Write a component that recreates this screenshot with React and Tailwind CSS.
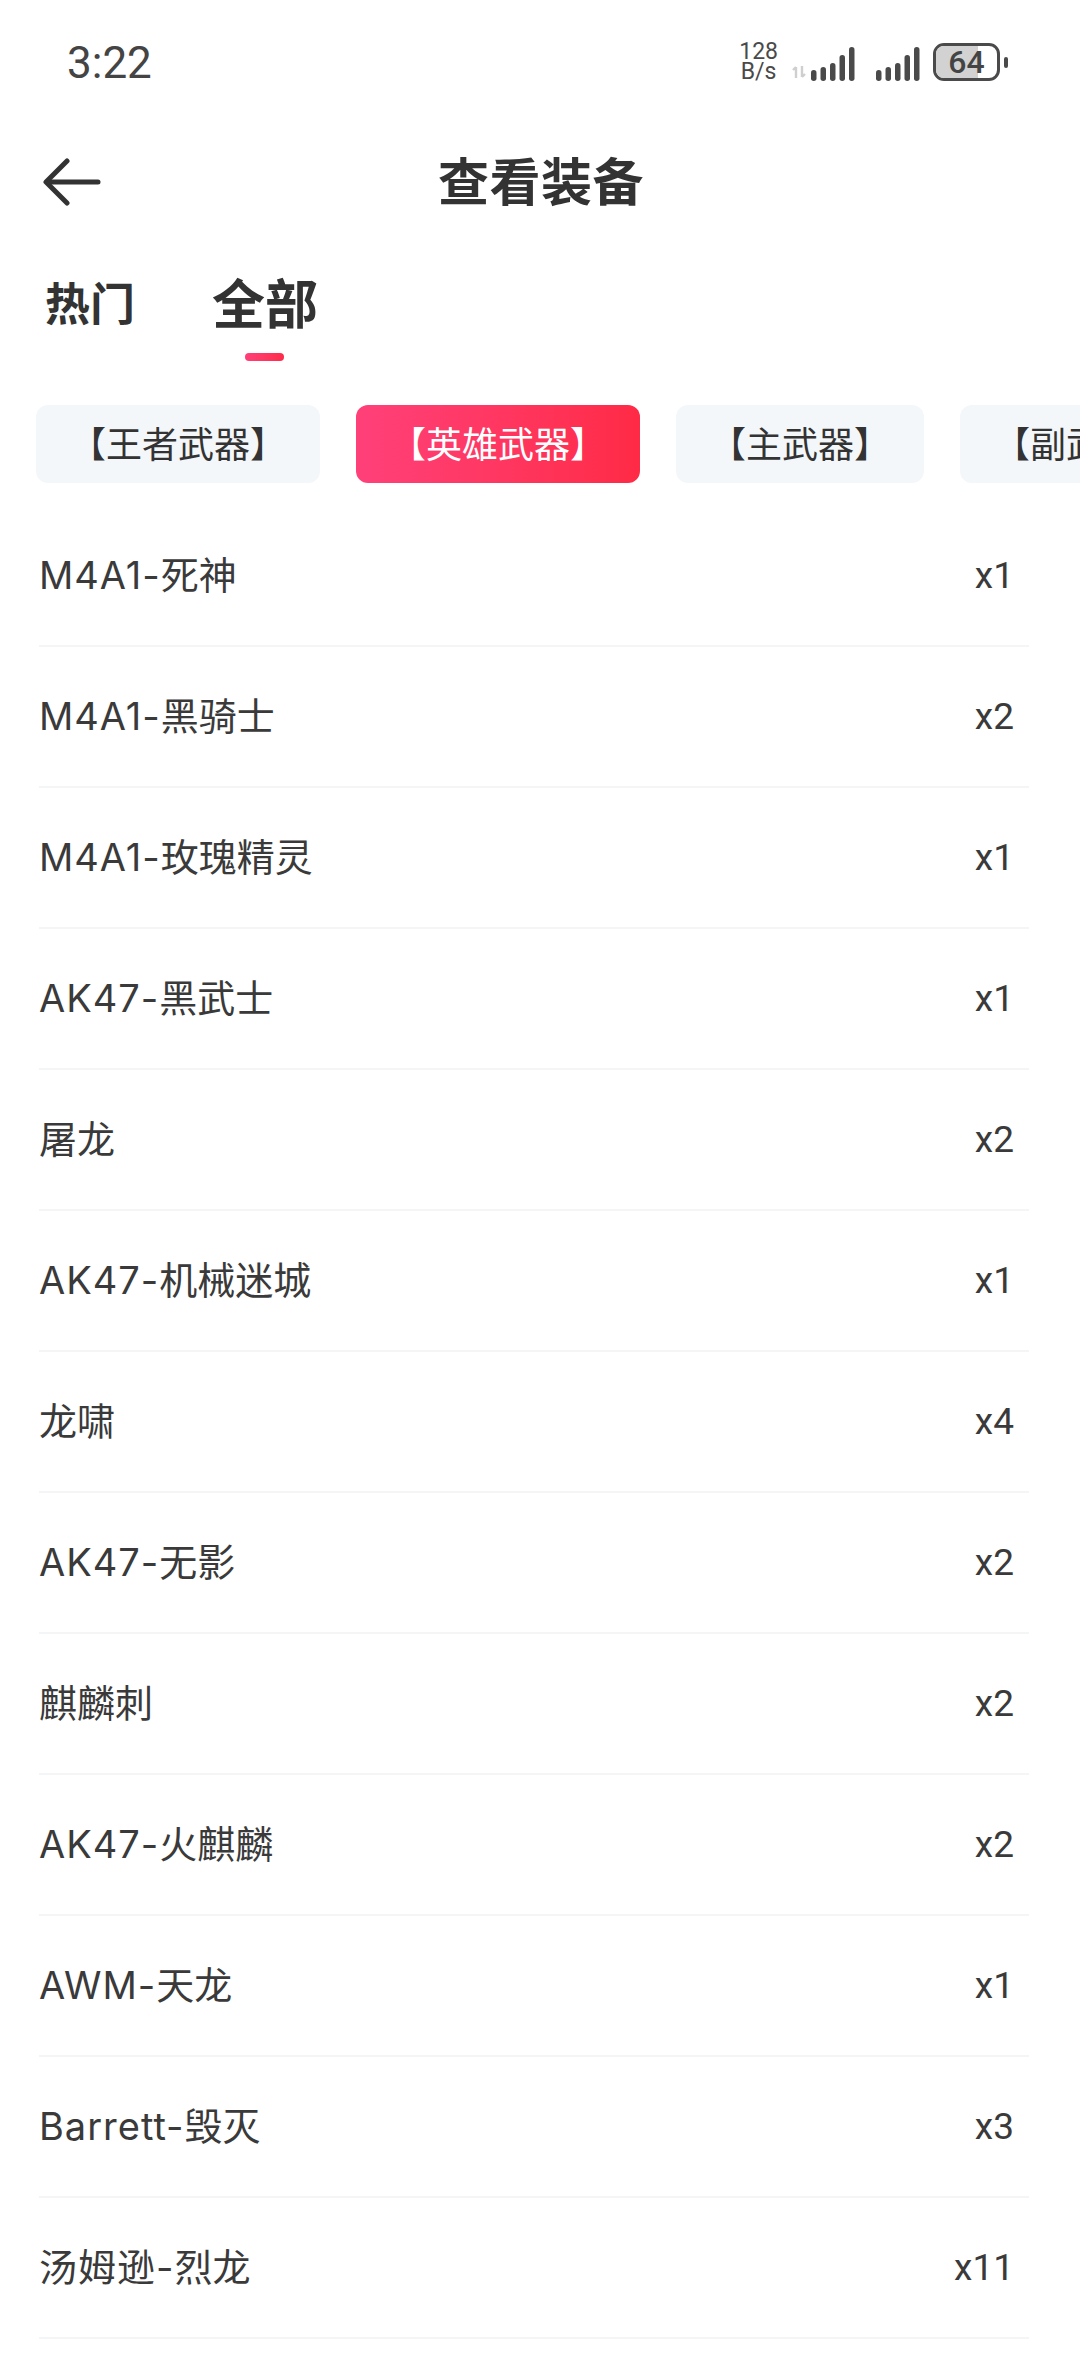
const chips = [
  { label: '【王者武器】', active: false },
  { label: '【英雄武器】', active: true },
  { label: '【主武器】', active: false },
  { label: '【副武器】', active: false },
]

// prefix is the part up to the hyphen, it runs a little wider in the picture
const items = [
  ['M4A1-', '死神', 'x1'],
  ['M4A1-', '黑骑士', 'x2'],
  ['M4A1-', '玫瑰精灵', 'x1'],
  ['AK47-', '黑武士', 'x1'],
  ['', '屠龙', 'x2'],
  ['AK47-', '机械迷城', 'x1'],
  ['', '龙啸', 'x4'],
  ['AK47-', '无影', 'x2'],
  ['', '麒麟刺', 'x2'],
  ['AK47-', '火麒麟', 'x2'],
  ['AWM-', '天龙', 'x1'],
  ['Barrett-', '毁灭', 'x3'],
  ['汤姆逊-', '烈龙', 'x11'],
]

function Signal() {
  return (
    <svg width="44" height="34" viewBox="0 0 44 34" fill="#4a4a4a">
      <rect x="0" y="23" width="5.5" height="11" rx="2.7" />
      <rect x="9.5" y="20" width="5.5" height="14" rx="2.7" />
      <rect x="19" y="16" width="5.5" height="18" rx="2.7" />
      <rect x="28.5" y="8" width="5.5" height="26" rx="2.7" />
      <rect x="38" y="0" width="5.5" height="34" rx="2.7" />
    </svg>
  )
}

function StatusBar() {
  return (
    <div className="flex items-center justify-between h-[124px] pl-[67px] pr-[72px]">
      <span className="text-[44px] leading-none text-[#444444] mt-[1px]">3:22</span>
      <div className="flex items-center">
        <div className="flex flex-col items-center text-[23px] leading-[20px] text-[#4a4a4a]">
          <span>128</span>
          <span>B/s</span>
        </div>
        <svg className="ml-[14px] mt-[20px]" width="14" height="14" viewBox="0 0 14 14" fill="none" stroke="#cfcfcf" strokeWidth="2.4">
          <path d="M4 13V2M1 5l3-3" />
          <path d="M10 1v11M13 9l-3 3" />
        </svg>
        <div className="ml-[5px] mt-[4px]"><Signal /></div>
        <div className="ml-[21px] mt-[4px]"><Signal /></div>
        <div className="ml-[13px] relative w-[67px] h-[38px] rounded-[11px] border-[3px] border-[#4a4a4a] overflow-hidden flex items-center justify-center">
          <div className="absolute inset-y-0 left-0 w-[42px] bg-[#d2d2d2]" />
          <span className="relative text-[32px] leading-none font-medium text-[#444444]">64</span>
        </div>
        <div className="ml-[4px] w-[4px] h-[11px] rounded-full bg-[#4a4a4a]" />
      </div>
    </div>
  )
}

export default function App() {
  return (
    <div className="font-['Roboto','Noto_Sans_CJK_SC',sans-serif] w-[1080px] h-[2373px] overflow-hidden bg-white text-[#333333]">
      <StatusBar />

      <div className="relative flex items-center justify-center h-[116px] pt-[2px] pl-[2px]">
        <svg className="absolute left-[42px] top-[34px]" width="60" height="48" viewBox="0 0 60 48" fill="none" stroke="#333333" strokeWidth="5" strokeLinecap="round" strokeLinejoin="round">
          <path d="M25 3L4 24l21 21" />
          <path d="M6 24h50" />
        </svg>
        <h1 className="text-[51px] leading-none font-bold text-[#333333] tracking-[0.5px]">查看装备</h1>
      </div>

      <div className="flex items-center gap-[77px] pl-[45px] pt-[33px]">
        <span className="text-[45px] leading-[66px] font-bold">热门</span>
        <span className="text-[53px] leading-[65px] font-bold">全部</span>
      </div>
      <div className="pl-[245px] pt-[14px]">
        <div className="w-[39px] h-[8px] rounded-full bg-gradient-to-r from-[#ff3f78] to-[#ff2a48]" />
      </div>

      <div className="flex gap-[36px] pl-[36px] pt-[44px] overflow-hidden">
        {chips.map((chip) => (
          <div
            key={chip.label}
            className={
              chip.active
                ? 'shrink-0 flex items-center h-[78px] px-[34px] pt-[3px] rounded-[12px] text-[36px] text-white bg-gradient-to-r from-[#ff4079] to-[#ff2a45]'
                : 'shrink-0 flex items-center h-[78px] px-[34px] pt-[3px] rounded-[12px] text-[36px] text-[#333333] bg-[#f4f7f9]'
            }
          >
            {chip.label}
          </div>
        ))}
      </div>

      <div className="pt-[23px] pl-[39px] pr-[51px]">
        {items.map(([prefix, name, count], i) => (
          <div key={i} className="flex items-center justify-between h-[141px] border-b-2 border-[#f4f5f6] text-[38px] text-[#3a3a3a]">
            <span className="font-['Inter','Noto_Sans_CJK_SC',sans-serif]">
              <span className="tracking-[1px]">{prefix}</span>
              {name}
            </span>
            <span className="text-[37px] pr-[15px]">{count}</span>
          </div>
        ))}
      </div>
    </div>
  )
}
